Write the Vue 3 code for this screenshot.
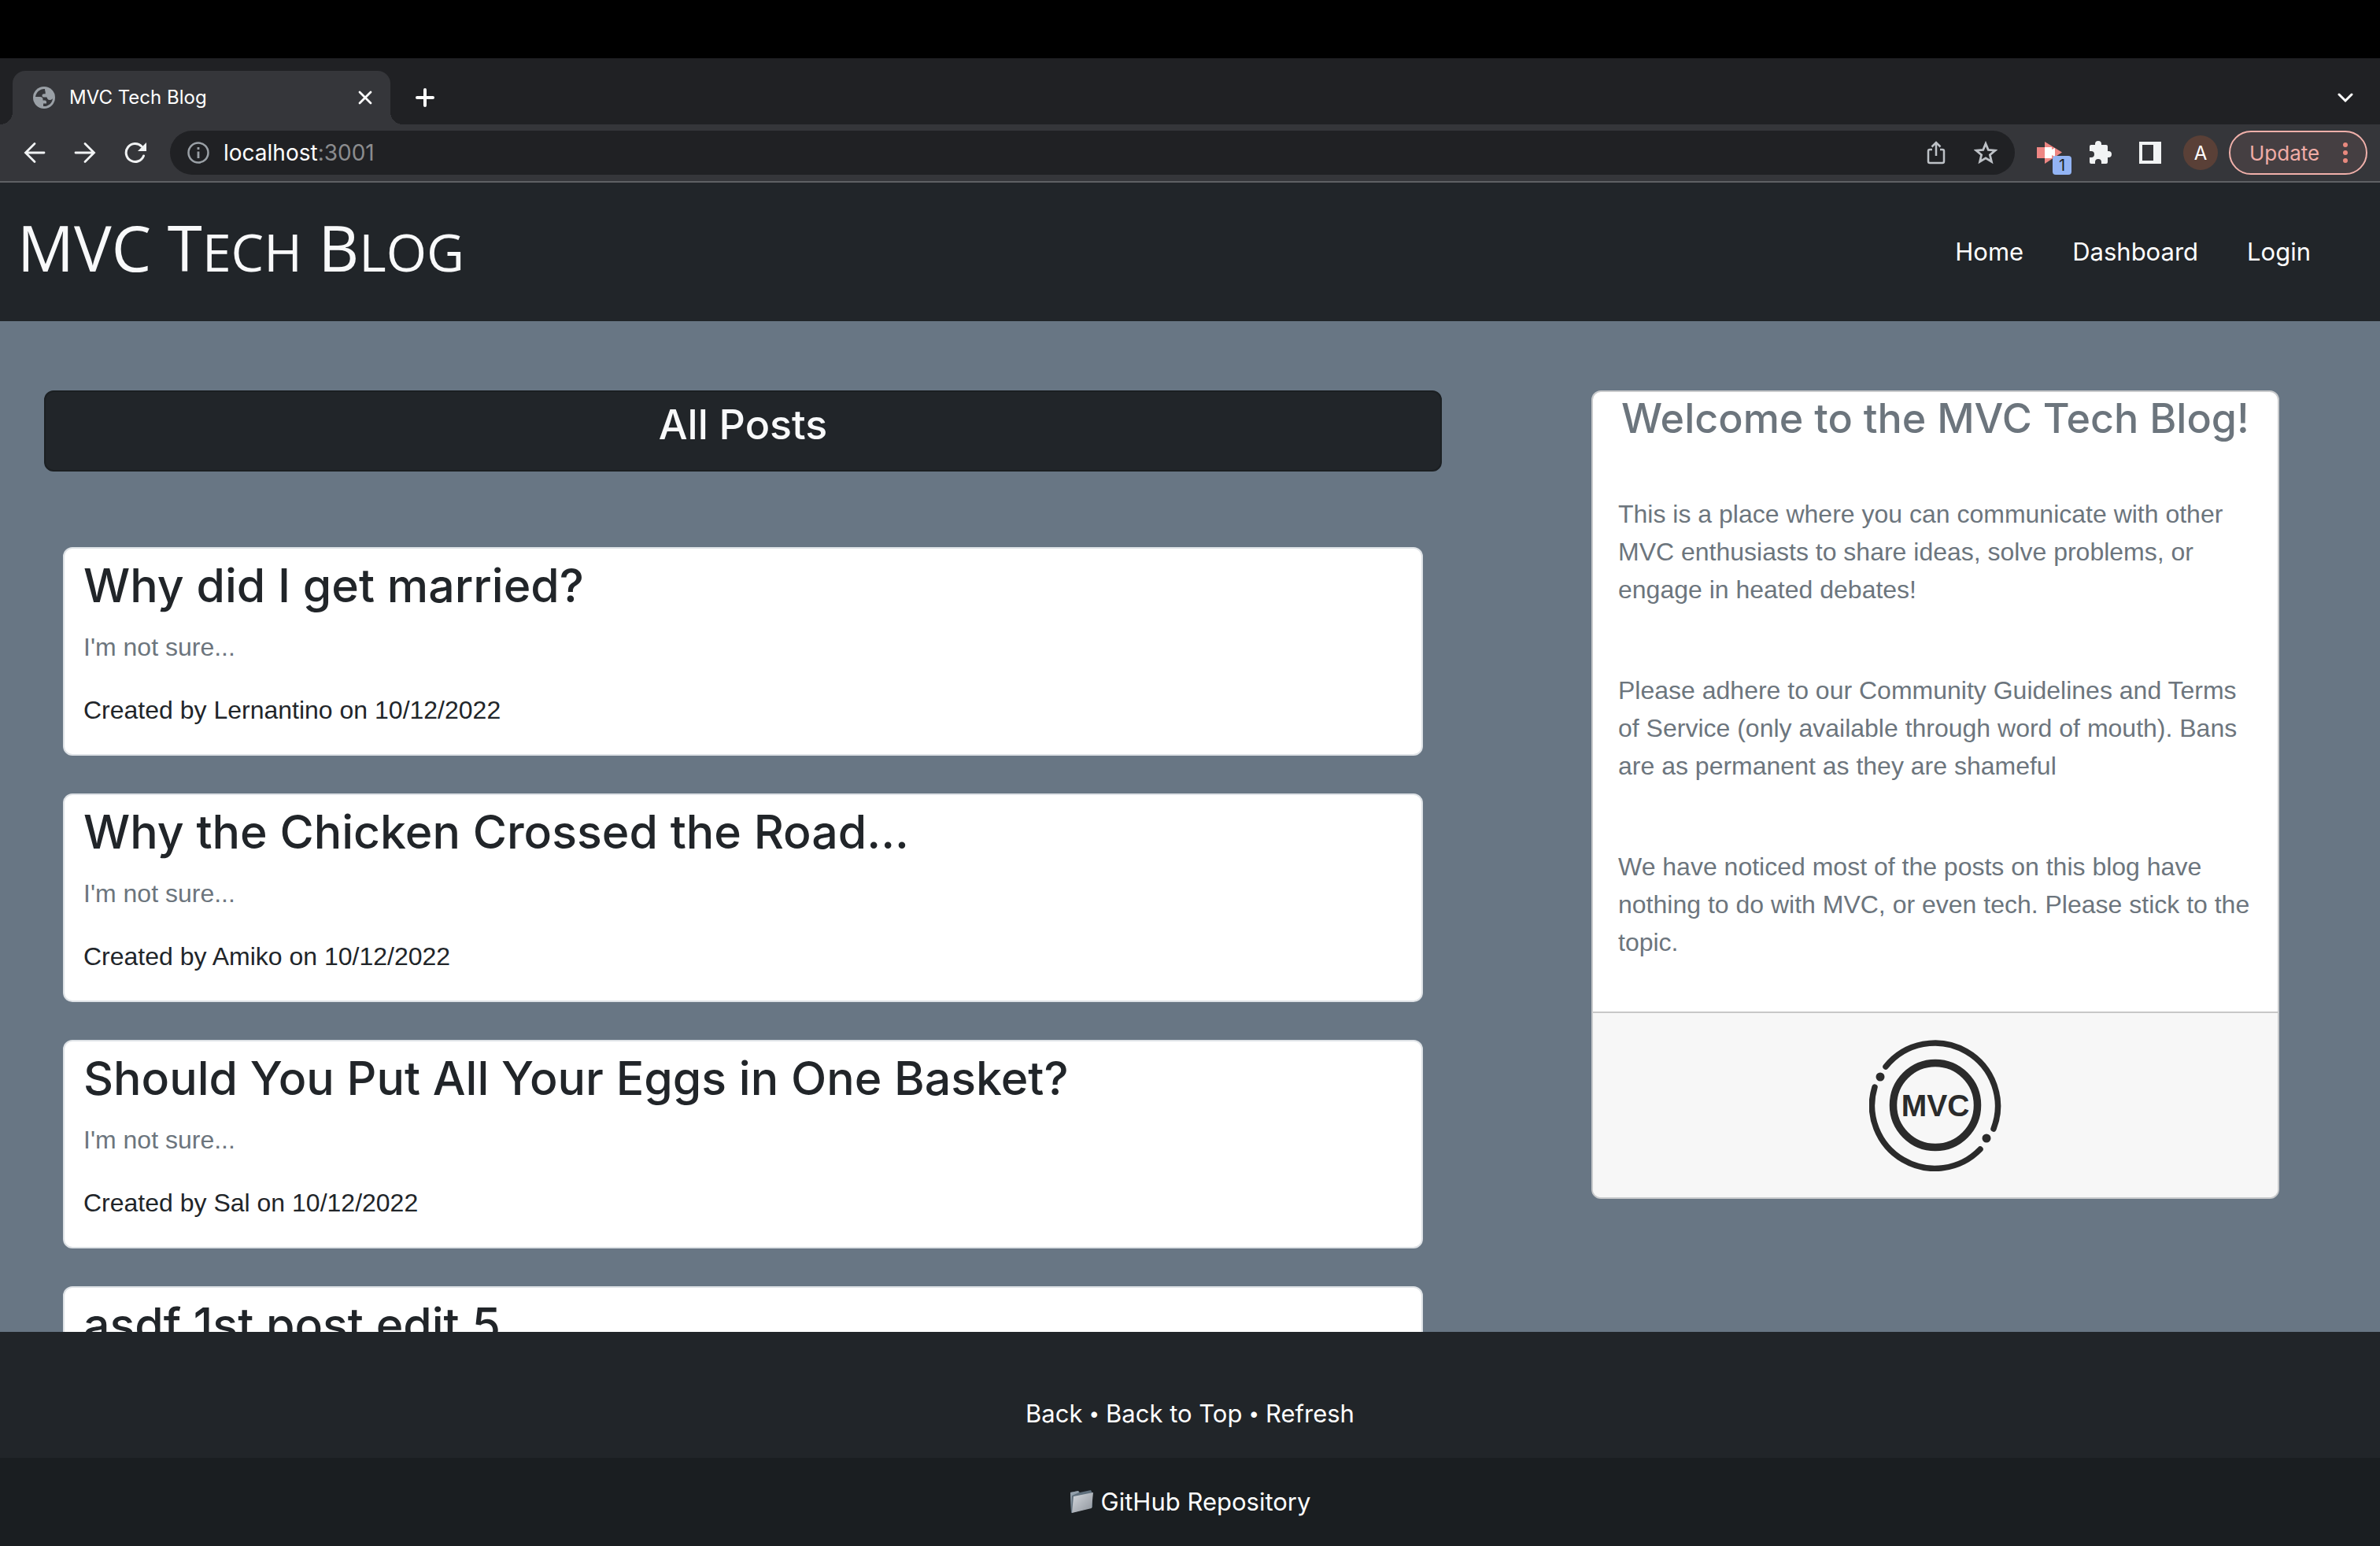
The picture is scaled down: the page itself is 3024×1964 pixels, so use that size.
<script setup>
const posts = [
  { title: 'Why did I get married?', text: "I'm not sure...", author: 'Lernantino', date: '10/12/2022' },
  { title: 'Why the Chicken Crossed the Road...', text: "I'm not sure...", author: 'Amiko', date: '10/12/2022' },
  { title: 'Should You Put All Your Eggs in One Basket?', text: "I'm not sure...", author: 'Sal', date: '10/12/2022' },
  { title: 'asdf 1st post edit 5' },
]

const notes = [
  'This is a place where you can communicate with other MVC enthusiasts to share ideas, solve problems, or engage in heated debates!',
  'Please adhere to our Community Guidelines and Terms of Service (only available through word of mouth). Bans are as permanent as they are shameful',
  'We have noticed most of the posts on this blog have nothing to do with MVC, or even tech. Please stick to the topic.',
]
</script>

<template>
  <div class="window">
    <div class="menu-bar"></div>

    <div class="tab-strip">
      <div class="tab">
        <svg width="28" height="28" viewBox="0 0 28 28">
          <circle cx="14" cy="14" r="14" fill="#9aa0a6" />
          <path d="M15 3C9 2.600 4 7 3 13h6c2 0 3.500 1 3.500 3v1.500h2.500c1.500 0 2 1 2 2.500v1.500h-4V25c6 0.800 11.500-4 12-10-1 1.500-2.500 2-4 2-2.500 0-3-2-3.500-3.500h-4c-1.500 0-2-1-2-2.200 0-1.300 1-2 2.200-2h2V7.500C15.700 6 15 5 15 3z" fill="#35363a" />
        </svg>
        <span class="tab-title">MVC Tech Blog</span>
        <button class="plain" aria-label="Close tab">
          <svg width="18" height="18" viewBox="0 0 18 18"><path d="M2 2l14 14M16 2L2 16" stroke="#fff" stroke-width="2.800" stroke-linecap="round" /></svg>
        </button>
      </div>
      <button class="plain new-tab" aria-label="New tab">
        <svg width="24" height="24" viewBox="0 0 24 24"><path d="M12 2v20M2 12h20" stroke="#fff" stroke-width="4" stroke-linecap="round" /></svg>
      </button>
      <button class="plain tab-menu" aria-label="Search tabs">
        <svg width="20" height="14" viewBox="0 0 20 14"><path d="M2 3l8 8 8-8" fill="none" stroke="#fff" stroke-width="3" stroke-linecap="round" /></svg>
      </button>
    </div>

    <div class="toolbar">
      <div class="nav-buttons">
        <button class="plain" aria-label="Back">
          <svg width="28" height="28" viewBox="0 0 28 28"><path d="M26 14H3M14 2.500L2.500 14 14 25.500" fill="none" stroke="#f1f3f4" stroke-width="2.800" stroke-linecap="round" /></svg>
        </button>
        <button class="plain" aria-label="Forward">
          <svg width="28" height="28" viewBox="0 0 28 28"><path d="M2 14h23M14 2.500L25.500 14 14 25.500" fill="none" stroke="#f1f3f4" stroke-width="2.800" stroke-linecap="round" /></svg>
        </button>
        <button class="plain" aria-label="Reload">
          <svg width="28" height="28" viewBox="0 0 28 28"><path d="M24.500 18A11.500 11.500 0 1 1 22 6" fill="none" stroke="#f1f3f4" stroke-width="3" stroke-linecap="round" /><path d="M28 1v11H17z" fill="#f1f3f4" /></svg>
        </button>
      </div>
      <div class="address">
        <svg width="28" height="28" viewBox="0 0 28 28"><circle cx="14" cy="14" r="12.500" fill="none" stroke="#9aa0a6" stroke-width="2.500" /><path d="M14 12.500V21M14 7v3" stroke="#9aa0a6" stroke-width="2.800" /></svg>
        <span class="url">localhost<span class="port">:3001</span></span>
        <button class="plain" aria-label="Share">
          <svg width="24" height="30" viewBox="0 0 24 30"><path d="M7 11H4q-2 0-2 2v13q0 2 2 2h16q2 0 2-2V13q0-2-2-2h-3M12 19V3M6.500 7.500L12 2l5.500 5.500" fill="none" stroke="#bdc1c6" stroke-width="2.500" /></svg>
        </button>
        <button class="plain" aria-label="Bookmark">
          <svg width="30" height="30" viewBox="0 0 30 30"><path d="M15 3.500l3.300 8 8.700.7-6.600 5.600 2 8.500L15 21.800l-7.400 4.500 2-8.500L3 12.200l8.700-.7z" fill="none" stroke="#bdc1c6" stroke-width="2.800" /></svg>
        </button>
      </div>
      <div class="extensions">
        <button class="plain recorder" aria-label="Recorder extension">
          <svg width="32" height="28" viewBox="0 0 32 28"><path d="M0 7h10v14H0z" fill="#ee8683" /><path d="M10 0l22 13.500L10 28z" fill="#ee8683" /><path d="M10 7h9v3l4-2v11l-4-2v4h-9z" fill="#fff" /></svg>
          <span class="badge">1</span>
        </button>
        <button class="plain" aria-label="Extensions">
          <svg width="30" height="30" viewBox="0 0 30 30"><path d="M3 5h5V4a4 4 0 0 1 8 0v1h6q2 0 2 2v6h1a4 4 0 0 1 0 8h-1v6q0 2-2 2h-6v-2a4 4 0 0 0-8 0v2H3q-2 0-2-2v-6h2a4 4 0 0 0 0-8H1V7q0-2 2-2z" fill="#f1f3f4" /></svg>
        </button>
        <button class="plain" aria-label="Side panel">
          <svg width="28" height="28" viewBox="0 0 28 28"><path d="M0 0h28v28H0zM4 4v20h14V4z" fill="#f1f3f4" fill-rule="evenodd" /></svg>
        </button>
      </div>
      <button class="avatar" aria-label="Profile">A</button>
      <button class="update">
        Update
        <svg width="8" height="28" viewBox="0 0 8 28"><g fill="#e8897e"><circle cx="4" cy="4" r="3" /><circle cx="4" cy="14" r="3" /><circle cx="4" cy="24" r="3" /></g></svg>
      </button>
    </div>

    <header class="site-header">
      <h1 class="brand">MVC T<span class="small">ech</span> B<span class="small">log</span></h1>
      <nav class="site-nav">
        <a href="#">Home</a>
        <a href="#">Dashboard</a>
        <a href="#">Login</a>
      </nav>
    </header>

    <main class="content">
      <section class="feed">
        <div class="feed-head"><h2>All Posts</h2></div>
        <div class="posts">
          <article v-for="post in posts" :key="post.title" class="post">
            <h2 class="post-title">{{ post.title }}</h2>
            <p v-if="post.text" class="muted">{{ post.text }}</p>
            <p v-if="post.author">Created by {{ post.author }} on {{ post.date }}</p>
          </article>
        </div>
      </section>

      <aside class="welcome">
        <h2>Welcome to the MVC Tech Blog!</h2>
        <div class="notes">
          <p v-for="note in notes" :key="note">{{ note }}</p>
        </div>
        <div class="welcome-foot">
          <svg width="168" height="168" viewBox="0 0 168 168" role="img" aria-label="MVC logo">
            <g fill="none" stroke="#2b2b2b" stroke-linecap="round">
              <circle cx="84" cy="84" r="53.500" stroke-width="9.500" />
              <path d="M21 35A80 80 0 0 1 158 114" stroke-width="7.500" />
              <path d="M7 61A80 80 0 0 0 141 140" stroke-width="7.500" />
            </g>
            <circle cx="14" cy="48" r="5.500" fill="#2b2b2b" />
            <circle cx="149" cy="126" r="5.500" fill="#2b2b2b" />
            <text x="84" y="98" text-anchor="middle" class="logo-text">MVC</text>
          </svg>
        </div>
      </aside>
    </main>

    <footer class="site-footer">
      <div class="footer-links">
        <a href="#">Back</a>
        <span class="dot">•</span>
        <a href="#">Back to Top</a>
        <span class="dot">•</span>
        <a href="#">Refresh</a>
      </div>
      <div class="footer-repo">
        <a href="#" class="repo">
          <svg width="32" height="32" viewBox="0 0 32 32">
            <defs>
              <linearGradient id="folder" x1="0" y1="0" x2="1" y2="1"><stop offset="0" stop-color="#d5d9de" /><stop offset="1" stop-color="#8d939b" /></linearGradient>
            </defs>
            <path d="M1 4l10-2 2 2 14-3 2 4v18L2 30z" fill="#5f6f7c" />
            <path d="M1 4l10-2 1 2-9 4-1 20z" fill="#93a0ab" />
            <path d="M5 9l25-5-2 20L3 30z" fill="url(#folder)" />
          </svg>
          GitHub Repository
        </a>
      </div>
    </footer>
  </div>
</template>

<style>
body {
  background: #687684;
}
</style>

<style scoped>
.window {
  display: flex;
  flex-direction: column;
  height: 100vh;
  overflow: hidden;
  font-family: Inter, "Liberation Sans", sans-serif;
  font-size: 31px;
  line-height: 48px;
  color: #212529;
}
.window * {
  box-sizing: border-box;
}
h1, h2, p {
  margin: 0;
}
svg {
  display: block;
  flex: none;
}
a {
  color: inherit;
  text-decoration: none;
}
button {
  font-family: inherit;
}
.plain {
  padding: 0;
  border: 0;
  background: none;
}
.menu-bar {
  flex: none;
  height: 74px;
  background: #000;
}

/* tabs */
.tab-strip {
  flex: none;
  display: flex;
  align-items: center;
  height: 84px;
  padding: 16px 34px 0 16px;
  background: #202124;
}
.tab {
  position: relative;
  display: flex;
  align-items: center;
  width: 480px;
  height: 68px;
  padding: 0 23px 0 26px;
  border-radius: 16px 16px 0 0;
  background: #35363a;
  color: #fff;
  font-size: 24px;
}
.tab::before,
.tab::after {
  content: "";
  position: absolute;
  bottom: 0;
  width: 16px;
  height: 16px;
}
.tab::before {
  left: -16px;
  background: radial-gradient(circle at 0 0, transparent 16px, #35363a 16px);
}
.tab::after {
  right: -16px;
  background: radial-gradient(circle at 100% 0, transparent 16px, #35363a 16px);
}
.tab-title {
  flex: 1;
  margin-left: 18px;
}
.new-tab {
  margin-left: 32px;
}
.tab-menu {
  margin-left: auto;
}

/* toolbar */
.toolbar {
  flex: none;
  display: flex;
  align-items: center;
  height: 74px;
  padding: 0 16px 0 30px;
  border-bottom: 2px solid #5f6164;
  background: #35363a;
}
.nav-buttons {
  display: flex;
  gap: 36px;
}
.address {
  flex: 1;
  display: flex;
  align-items: center;
  height: 56px;
  margin: 0 28px 0 30px;
  padding: 0 22px;
  border-radius: 28px;
  background: #202124;
  color: #fff;
  font-size: 28px;
}
.url {
  flex: 1;
  margin-left: 18px;
}
.port {
  color: #8b8c8e;
}
.address .plain + .plain {
  margin-left: 36px;
}
.extensions {
  display: flex;
  align-items: center;
  gap: 34px;
}
.recorder {
  position: relative;
}
.badge {
  position: absolute;
  left: 20px;
  top: 18px;
  width: 24px;
  height: 24px;
  border-radius: 4px;
  background: #93b4f4;
  color: #202124;
  font-size: 20px;
  line-height: 24px;
  text-align: center;
}
.avatar {
  width: 44px;
  height: 44px;
  margin: 0 14px 0 28px;
  padding: 0;
  border: 0;
  border-radius: 50%;
  background: #5a4037;
  color: #fff;
  font-size: 24px;
}
.update {
  display: flex;
  align-items: center;
  justify-content: space-between;
  width: 176px;
  height: 56px;
  padding: 0 22px 0 24px;
  border: 2px solid #f0b0aa;
  border-radius: 28px;
  background: #453f42;
  color: #f0aca6;
  font-size: 26px;
}

/* site header */
.site-header {
  flex: none;
  display: flex;
  align-items: center;
  justify-content: space-between;
  height: 176px;
  padding: 0 88px 0 22px;
  background: #212529;
  color: #f8f9fa;
}
.brand {
  padding-bottom: 8px;
  font-family: "Open Sans", sans-serif;
  font-size: 80px;
  font-weight: 500;
  line-height: 96px;
}
.small {
  font-size: 66px;
  text-transform: uppercase;
}
.site-nav {
  display: flex;
  gap: 62px;
  color: #fff;
}

/* page content */
.content {
  flex: 1;
  min-height: 0;
  display: grid;
  grid-template-columns: 1776fr 874fr;
  align-items: start;
  gap: 190px;
  overflow: hidden;
  padding: 88px 128px 0 56px;
  background: #687684;
}
.feed-head {
  padding: 8px 24px 24px;
  border: 2px solid #1b1f22;
  border-radius: 12px;
  background: #212529;
  color: #f8f9fa;
  text-align: center;
}
h2 {
  font-size: 52px;
  font-weight: 500;
  line-height: 67px;
}
.posts {
  display: flex;
  flex-direction: column;
  gap: 48px;
  padding: 96px 24px 0;
}
.post {
  padding: 8px 24px 0;
  border: 2px solid #dee2e6;
  border-radius: 12px;
  background: #fff;
}
.post-title {
  margin-bottom: 16px;
  font-size: 59px;
  line-height: 77px;
}
p {
  font-family: "Liberation Sans", Arial, sans-serif;
  font-size: 32px;
}
.post p {
  margin-bottom: 32px;
}
.post .muted {
  color: #6c757d;
}
.welcome {
  border: 2px solid #c8cacc;
  border-radius: 12px;
  background: #fff;
  color: #6c757d;
  overflow: hidden;
}
.welcome h2 {
  text-align: center;
}
.notes {
  display: flex;
  flex-direction: column;
  gap: 80px;
  padding: 64px 32px;
}
.welcome-foot {
  display: flex;
  justify-content: center;
  padding: 33px 32px;
  border-top: 2px solid #c8c8c8;
  background: #f7f7f7;
}
.logo-text {
  font-family: "Liberation Sans", Arial, sans-serif;
  font-size: 39px;
  font-weight: 700;
  fill: #2b2b2b;
}

/* footer */
.site-footer {
  flex: none;
  background: #212529;
  color: #fff;
}
.footer-links {
  display: flex;
  align-items: center;
  justify-content: center;
  gap: 8px;
  padding: 80px 0 32px;
}
.dot {
  font-size: 24px;
}
.footer-repo {
  padding: 32px 0;
  background: #1a1e21;
}
.repo {
  display: flex;
  align-items: center;
  justify-content: center;
  gap: 8px;
}
</style>
